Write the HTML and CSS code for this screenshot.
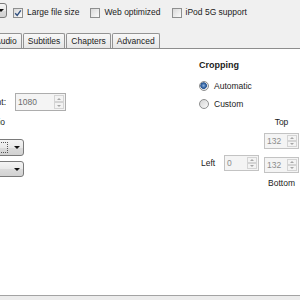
FILE: index.html
```html
<!DOCTYPE html>
<html lang="en">
<head>
  <meta charset="UTF-8">
  <title>Picture settings</title>
  <link rel="stylesheet" href="styles.css">
</head>
<body>
  <div class="window">
    <div class="toolbar">
      <div class="combo combo-cut"><span class="combo-arrow"></span></div>
      <label class="check first"><span class="box"><svg width="8" height="8" viewBox="0 0 8 8"><path d="M1.2 4.2 L3.2 6.4 L6.8 1.4" fill="none" stroke="#2f4f7f" stroke-width="1.4"/></svg></span>Large file size</label>
      <label class="check"><span class="box"></span>Web optimized</label>
      <label class="check"><span class="box"></span>iPod 5G support</label>
    </div>

    <div class="tabs">
      <div class="tab tab-cut">Audio</div>
      <div class="tab">Subtitles</div>
      <div class="tab">Chapters</div>
      <div class="tab">Advanced</div>
    </div>

    <div class="panel">
      <div class="size">
        <div class="field">
          <span class="field-label">Height:</span>
          <div class="spin spin-wide">
            <span class="spin-value">1080</span>
            <span class="spin-btns"><i class="up"></i><i class="down"></i></span>
          </div>
        </div>
        <div class="aspect">Keep Aspect Ratio</div>
        <div class="combo combo-wide combo-first"><span class="combo-text focus"></span><span class="combo-arrow"></span></div>
        <div class="combo combo-wide combo-second"><span class="combo-text"></span><span class="combo-arrow"></span></div>
      </div>

      <!-- cropping -->
      <div class="crop">
        <div class="crop-title">Cropping</div>
        <label class="radio first"><span class="dot on"></span>Automatic</label>
        <label class="radio"><span class="dot"></span>Custom</label>
        <div class="crop-grid">
          <span class="crop-top">Top</span>
          <div class="spin spin-top"><span class="spin-value">132</span><span class="spin-btns"><i class="up"></i><i class="down"></i></span></div>
          <div class="crop-left">
            <span>Left</span>
            <div class="spin"><span class="spin-value">0</span><span class="spin-btns"><i class="up"></i><i class="down"></i></span></div>
          </div>
          <div class="spin spin-bottom"><span class="spin-value">132</span><span class="spin-btns"><i class="up"></i><i class="down"></i></span></div>
          <span class="crop-bottom">Bottom</span>
        </div>
      </div>
    </div>

    <div class="status"></div>
  </div>
</body>
</html>
```

FILE: styles.css
```css
body {
  margin: 0;
  background-color: #f0f0f0;
  font-family: 'Liberation Sans', Arial, sans-serif;
  font-size: 8.5px;
  color: #1b1b1b;
  overflow: hidden;
}
.window {
  width: 300px;
  height: 300px;
  display: flex;
  flex-direction: column;
  overflow: hidden;
}

/* top option row */
.toolbar {
  height: 33px;
  box-sizing: border-box;
  padding-top: 3px;
  display: flex;
  align-items: flex-start;
  flex: none;
}
.check {
  display: flex;
  align-items: center;
  gap: 4px;
  margin-top: 4px;
  margin-left: 11px;
  line-height: 11px;
  white-space: nowrap;
}
.check.first { margin-left: 6px; }
.box {
  width: 10px;
  height: 10px;
  box-sizing: border-box;
  border: 1px solid #8e8f8f;
  background: linear-gradient(135deg, #d9d9d9, #fbfbfb);
  display: flex;
  align-items: center;
  justify-content: center;
}

/* combo boxes */
.combo {
  display: flex;
  box-sizing: border-box;
  border: 1px solid #7a7a7a;
  border-radius: 3px;
  background: linear-gradient(#f4f4f4, #e9e9e9 50%, #dbdbdb 51%, #d2d2d2);
  flex: none;
}
.combo-cut {
  width: 20px;
  height: 15px;
  margin-left: -13px;
  justify-content: flex-end;
}
.combo-text {
  flex: 1;
  margin: 2px;
}
.combo-text.focus {
  border: 1px dotted #555;
}
.combo-arrow {
  width: 13px;
  flex: none;
  display: flex;
  align-items: center;
  justify-content: center;
}
.combo-cut .combo-arrow { width: 10px; }
.combo-arrow::after {
  content: "";
  border-left: 3px solid transparent;
  border-right: 3px solid transparent;
  border-top: 3px solid #111;
}

/* tabs */
.tabs {
  height: 15px;
  display: flex;
  align-items: flex-end;
  flex: none;
}
.tab {
  height: 15px;
  box-sizing: border-box;
  border: 1px solid #939393;
  border-bottom: none;
  border-radius: 2px 2px 0 0;
  padding: 0 4px;
  margin-right: 1px;
  line-height: 14px;
  background: linear-gradient(#f8f8f8, #e6e6e6);
  white-space: nowrap;
}
.tab-cut { margin-left: -10px; }

/* page body */
.panel {
  flex: 1;
  display: flex;
  background-color: #fff;
  border-top: 1px solid #8d8d8d;
  border-bottom: 1px solid #a3a3a3;
}
.status {
  height: 4px;
  flex: none;
  background-color: #ececec;
}

.size {
  flex: none;
  width: 106px;
  margin-left: -40px;
  padding-top: 44px;
}
.field {
  display: flex;
  align-items: center;
}
.field-label {
  width: 46px;
  margin-right: 9px;
  text-align: right;
}
.aspect {
  width: 45px;
  height: 12px;
  line-height: 12px;
  margin-top: 5px;
  display: flex;
  justify-content: flex-end;
  white-space: nowrap;
}
.combo-wide { width: 64px; }
.combo-first { height: 17px; margin-top: 11px; }
.combo-second { height: 16px; margin-top: 5px; }

/* spinners */
.spin {
  width: 35px;
  height: 16px;
  box-sizing: border-box;
  border: 1px solid #c3c3c3;
  background-color: #f4f4f4;
  display: flex;
  color: #8c8c8c;
  flex: none;
}
.spin-wide {
  width: 51px;
  height: 18px;
  border-color: #adadad;
  color: #6c6c6c;
}
.spin-value {
  flex: 1;
  padding-left: 2px;
  display: flex;
  align-items: center;
}
.spin-btns {
  width: 10px;
  display: flex;
  flex-direction: column;
  padding: 1px 1px 1px 0;
}
.spin-btns i {
  flex: 1;
  border: 1px solid #d4d4d4;
  background-color: #f3f3f3;
  display: flex;
  align-items: center;
  justify-content: center;
}
.spin-btns i::after {
  content: "";
  border-left: 2px solid transparent;
  border-right: 2px solid transparent;
}
.spin-btns .up::after { border-bottom: 2px solid #a5a5a5; }
.spin-btns .down::after { border-top: 2px solid #a5a5a5; }

/* cropping */
.crop {
  margin-left: auto;
  width: 101px;
  flex: none;
  padding-top: 10px;
}
.crop-title {
  font-size: 9px;
  font-weight: bold;
  line-height: 12px;
}
.radio {
  height: 18px;
  display: flex;
  align-items: center;
  gap: 5px;
}
.radio.first { margin-top: 6px; }
.dot {
  width: 10px;
  height: 10px;
  box-sizing: border-box;
  border-radius: 50%;
  border: 1px solid #8e8f8f;
  background: linear-gradient(135deg, #d4d4d4, #fafafa);
}
.dot.on {
  background: radial-gradient(circle at 45% 45%, #8fb4e0 0, #2a5a98 2.5px, #2a5a98 3px, #e4e4e4 3.6px, #f7f7f7);
}
.crop-grid {
  display: grid;
  grid-template-columns: 60px 35px;
  column-gap: 5px;
  margin-top: 3px;
}
.crop-top, .crop-bottom {
  grid-column: 2;
  line-height: 12px;
  text-align: center;
}
.spin-top { grid-column: 2; margin-top: 5px; }
.crop-left {
  grid-column: 1;
  margin-top: 3px;
  display: flex;
  align-items: center;
  justify-content: space-between;
  padding-left: 2px;
}
.spin-bottom { grid-column: 2; margin-top: 8px; }
.crop-bottom { margin-top: 4px; }
```
